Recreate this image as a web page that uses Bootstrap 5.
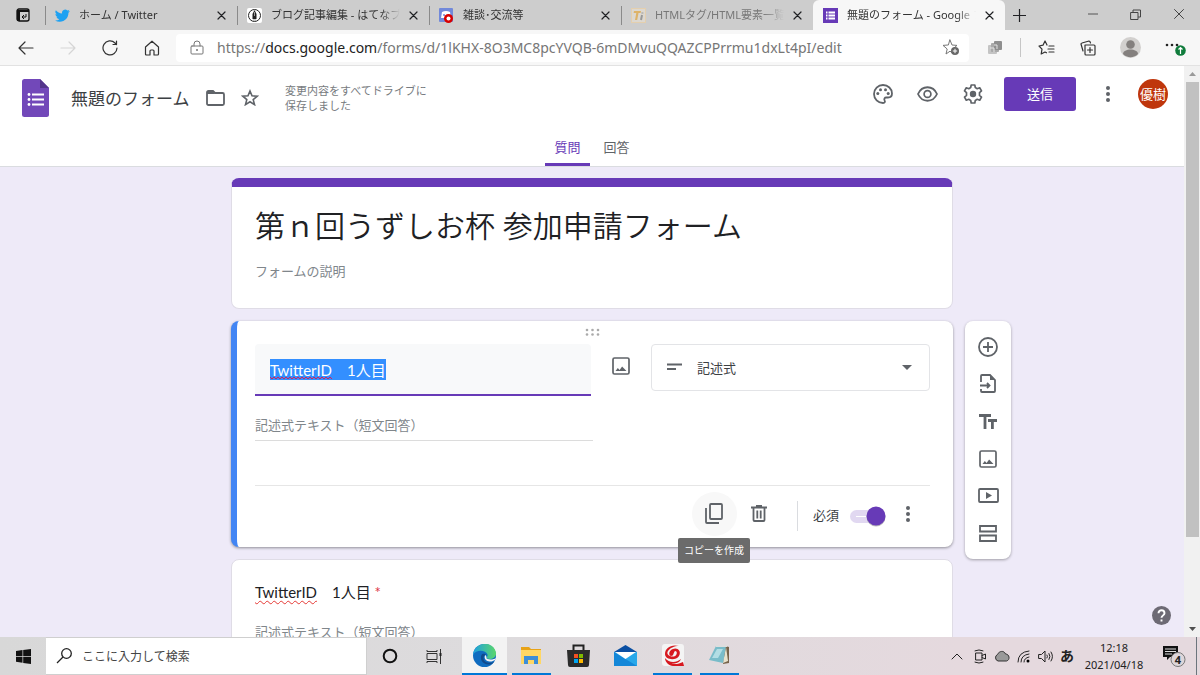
<!DOCTYPE html>
<html lang="ja">
<head>
<meta charset="utf-8">
<meta name="viewport" content="width=device-width, initial-scale=1">
<title>無題のフォーム - Google フォーム</title>
<link href="https://cdn.jsdelivr.net/npm/bootstrap@5.3.0/dist/css/bootstrap.min.css" rel="stylesheet">
<style>
  :root { --purple: #673ab7; --ink: #5f6368; }
  body { font-family: "Noto Sans", "Noto Sans CJK JP", sans-serif; font-size: 13px; color: #202124; line-height: 20px; }
  button, input, select { font: inherit; color: inherit; }
  .bare { border: 0; background: transparent; padding: 0; }
  svg { display: block; flex: none; }
  .ln { fill: none; stroke: currentColor; stroke-linecap: round; stroke-linejoin: round; }

  /* browser tabs */
  .tabstrip { background: #cdcdcd; height: 30px; font-size: 11px; padding-left: 45px; }
  .pin { left: 16px; top: 8px; }
  .btab { flex: 0 1 192px; min-width: 0; padding: 0 11px 0 10px; gap: 9px; }
  .btab::before { content: ""; position: absolute; left: 0; top: 6px; height: 19px; border-left: 1px solid #8a8a8a; }
  .btab .label { flex: 1 1 0; white-space: nowrap; overflow: hidden; color: #333; -webkit-mask-image: linear-gradient(90deg, #000 85%, transparent); mask-image: linear-gradient(90deg, #000 85%, transparent); }
  .btab.fresh { background: #f7f7f7; border-radius: 6px 6px 0 0; }
  .btab.fresh::before { display: none; }
  .btab.dim .label { color: #777; }
  .winbtn { width: 43px; height: 28px; color: #444; }
  .winbtn svg { margin: auto; }

  /* address row */
  .addressrow { background: #f7f7f7; height: 36px; padding-left: 5px; border-bottom: 1px solid #e2e2e2; color: #333; }
  .navbtn { width: 42px; height: 30px; flex: none; }
  .navbtn svg { margin: auto; }
  .navbtn.menu { width: 49px; }
  .omnibox { background: #fff; height: 28px; border-radius: 4px; margin: 0 5px 0 3px; padding: 0 9px 0 14px; gap: 13px; font-size: 14px; color: #767676; }
  .omnibox b { font-weight: 400; color: #222; }
  .omnibox a { color: inherit; text-decoration: none; }

  /* forms header */
  .appbar { background: #fff; border-bottom: 1px solid #dadce0; color: var(--ink); }
  .approw { height: 63px; padding: 0 16px 0 22px; }
  .docname { width: 119px; font-size: 17px; color: #3c4043; height: 28px; margin: 0 16px 0 22px; }
  .saved { font-size: 11px; line-height: 15px; color: #777b80; margin-left: 26px; }
  .iconbtn { width: 45px; height: 34px; }
  .iconbtn svg { margin: auto; }
  .send { width: 72px; height: 34px; background: var(--purple); color: #fff; border: 0; border-radius: 3px; margin: 0 14px 0 9px; }
  .avatar { width: 30px; height: 30px; background: #bf360c; color: #fff; margin-left: 12px; white-space: nowrap; }
  .viewtab { width: 45px; height: 37px; padding-top: 2px; color: var(--ink); text-decoration: none; border-bottom: 3px solid transparent; }
  .viewtab.on { color: var(--purple); border-color: var(--purple); border-radius: 2px 2px 0 0; }

  /* canvas */
  .canvas { background: #eeeaf8; }
  .board { display: grid; grid-template-columns: 1fr minmax(0, 722px) 1fr; column-gap: 12px; padding-top: 11px; }
  .sheets { gap: 12px; }
  .sheet { background: #fff; border: 1px solid #dfdce6; border-radius: 8px; padding: 0 23px; }
  .sheet.head { border-top: 9px solid var(--purple); height: 131px; }
  .sheet.edit { border: 0; border-left: 6px solid #4285f4; padding: 0 23px 0 18px; height: 226px; box-shadow: 0 1px 3px #0006; }
  .sheet.view { padding-top: 22px; height: 160px; }
  .formtitle { font-size: 30px; height: 44px; margin-top: 15px; font-weight: 350; }
  .hint { color: #80868b; height: 22px; }
  .desc { margin-top: 13px; }
  .grip { height: 23px; padding-top: 7px; }
  .qbox { width: 336px; height: 52px; background: #f8f9fa; border: 0; border-bottom: 2px solid var(--purple); border-radius: 4px 4px 0 0; padding: 0 15px; outline: 0; }
  .qfont { font-family: Lato, "Noto Sans CJK JP", sans-serif; font-size: 15px; }
  .qbox::selection { background: #338fff; color: #fff; }
  .squiggle { left: 15px; top: 32px; }
  .typepick { height: 47px; border: 1px solid #e3e4e7; border-radius: 4px; padding-left: 45px; appearance: none; background: #fff; color: #3c4043; }
  .typewrap { width: 279px; }
  .lead-ico { left: 16px; top: 17px; }
  .drop-ico { right: 18px; top: 21px; }
  .answer { width: 338px; border-bottom: 1px solid #dcdcdc; margin-top: 15px; height: 30px; padding-bottom: 2px; }
  .foot { border-top: 1px solid #e6e6e6; margin-top: 44px; height: 56px; padding-right: 4px; color: var(--ink); }
  .round { width: 45px; height: 44px; border-radius: 50%; }
  .round svg { margin: auto; }
  .round.hov { background: #f8f8f8; }
  .bar { height: 30px; border-left: 1px solid #dadce0; margin: 4px 15px 0; }
  .required-name { color: #3c4043; padding-top: 3px; }
  .toggle { appearance: none; width: 36px; height: 22px; margin: 4px 0 0 11px; background: url("data:image/svg+xml,%3Csvg xmlns='http://www.w3.org/2000/svg' width='36' height='22'%3E%3Crect y='5' width='34' height='13' rx='6.5' fill='%23e1d8f1'/%3E%3Cpath d='M6 11.500h10' stroke='%23fff'/%3E%3Ccircle cx='26' cy='12' r='9.500' fill='%23bbb'/%3E%3Ccircle cx='26' cy='11' r='9.500' fill='%23673ab7'/%3E%3C/svg%3E"); }
  .tip { left: 441px; top: 217px; background: #6b6b6b; color: #fff; font-size: 10px; line-height: 25px; padding: 0 6px; border-radius: 2px; white-space: nowrap; z-index: 3; }
  .misspelt { text-decoration: underline wavy #e53935 1px; text-underline-offset: 2px; }
  .below { margin-top: 18px; }
  .sidetools { width: 46px; height: 238px; margin-top: 143px; background: #fff; border-radius: 8px; box-shadow: 0 1px 3px #0005; padding: 7px 0; color: var(--ink); }
  .sidetools .iconbtn { width: 46px; height: 38px; }
  .help { right: 13px; bottom: 12px; }
  .scroller { width: 16px; background: #f1f1f1; color: #505050; }
  .scroller svg { margin: 6px auto; }
  .thumb { flex: 0 0 455px; width: 13px; background: #c1c1c1; }

  /* taskbar */
  .taskbar { height: 38px; background: linear-gradient(90deg, #d8d8d8, #dddbdd 40%, #e5d9de 80%); color: #222; }
  .taskbar svg { margin: auto; }
  .start { width: 46px; }
  .search { width: 321px; background: #fff; border: 1px solid #cfcfcf; border-left: 0; padding-left: 10px; gap: 9px; }
  .search svg { margin: 0; }
  .search input { font-size: 12px; outline: 0; padding-top: 2px; }
  .search input::placeholder { color: #444; opacity: 1; }
  .app { width: 45px; }
  .pinned { width: 47px; padding: 0 4px; }
  .pinned .bare { border-bottom: 2px solid transparent; }
  .pinned .bare.run { border-color: #0078d7; }
  .pinned.now { padding: 0 1px; }
  .pinned.now .bare { background: #f3f3f3; }
  .clock { font-size: 11px; line-height: 17px; width: 66px; }
  .tray { gap: 7px; padding-right: 3px; }
  .kana { font-size: 14px; font-weight: 700; }
  .note { width: 43px; padding-right: 3px; }
</style>
</head>
<body class="vh-100 d-flex flex-column overflow-hidden">

<div class="tabstrip d-flex position-relative flex-shrink-0">
  <svg class="pin position-absolute" width="14" height="14" viewBox="0 0 14 14"><rect x="1" y="1" width="12" height="12" rx="2" fill="none" stroke="#111" stroke-width="1.300"/><path d="M1 2h12v2H4v9H1z" fill="#111"/><path d="M10 6v3H6m2-2L6 9l2 2" fill="none" stroke="#111"/></svg>
  <div class="btab d-flex align-items-center position-relative">
    <svg width="15" height="15" viewBox="0 0 24 24" fill="#1da1f2"><path d="M23.600 4.800c-.9.400-1.800.7-2.800.8 1-.6 1.800-1.600 2.100-2.700-1 .6-2 1-3.100 1.200a4.900 4.900 0 0 0-8.400 4.500C7.400 8.400 3.800 6.400 1.400 3.500a4.900 4.900 0 0 0 1.500 6.600c-.8 0-1.600-.2-2.200-.6 0 2.400 1.700 4.400 3.900 4.900-.7.200-1.500.2-2.200.1a4.900 4.900 0 0 0 4.600 3.400A10 10 0 0 1 0 19.900a14 14 0 0 0 7.500 2.200c9.100 0 14.300-7.700 14-14.600 1-.7 1.800-1.600 2.100-2.700z"/></svg>
    <span class="label">ホーム / Twitter</span>
    <button class="bare" aria-label="タブを閉じる"><svg width="9" height="9" viewBox="0 0 9 9"><path class="ln" d="M1 1l7 7M8 1L1 8" stroke-width="1.200"/></svg></button>
  </div>
  <div class="btab d-flex align-items-center position-relative">
    <svg width="15" height="15" viewBox="0 0 15 15"><rect width="15" height="15" rx="2" fill="#fff"/><circle cx="7.500" cy="7.500" r="6" fill="none" stroke="#222"/><path d="M7.500 2l2 4v5h-4V6z" fill="#222"/><path d="M7.500 4v4M6 12h3" stroke="#999"/></svg>
    <span class="label">ブログ記事編集 - はてなブログ</span>
    <button class="bare" aria-label="タブを閉じる"><svg width="9" height="9" viewBox="0 0 9 9"><path class="ln" d="M1 1l7 7M8 1L1 8" stroke-width="1.200"/></svg></button>
  </div>
  <div class="btab d-flex align-items-center position-relative">
    <svg width="15" height="15" viewBox="0 0 15 15"><rect width="14" height="14" rx="1" fill="#7289da"/><path d="M3 4q4-2 8 0l1 6H2z" fill="#fff"/><circle cx="5" cy="7" r="1" fill="#7289da"/><circle cx="9.500" cy="10.500" r="4.500" fill="#d80000"/><circle cx="9.500" cy="10.500" r="2" fill="#fff"/></svg>
    <span class="label">雑談･交流等</span>
    <button class="bare" aria-label="タブを閉じる"><svg width="9" height="9" viewBox="0 0 9 9"><path class="ln" d="M1 1l7 7M8 1L1 8" stroke-width="1.200"/></svg></button>
  </div>
  <div class="btab dim d-flex align-items-center position-relative">
    <svg width="15" height="15" viewBox="0 0 15 15"><rect x=".5" y=".5" width="14" height="14" fill="#ddd8d0" stroke="#e4cfae"/><path d="M3 3h7l-.4 2H7.500l-1.300 7H4l1.300-7H2.600z" fill="#deb368"/><path d="M11 7l-1 5M11.400 4.500v1" stroke="#999" stroke-width="2"/></svg>
    <span class="label">HTMLタグ/HTML要素一覧</span>
    <button class="bare" aria-label="タブを閉じる"><svg width="9" height="9" viewBox="0 0 9 9"><path class="ln" d="M1 1l7 7M8 1L1 8" stroke-width="1.200"/></svg></button>
  </div>
  <div class="btab fresh d-flex align-items-center position-relative">
    <svg width="15" height="15" viewBox="0 0 15 15"><rect width="15" height="15" fill="#673ab7"/><path d="M5.500 4.500H12M5.500 7.500H12M5.500 10.500H12M3 4.500h1.500M3 7.500h1.500M3 10.500h1.500" stroke="#fff" stroke-width="2"/></svg>
    <span class="label">無題のフォーム - Google フォーム</span>
    <button class="bare" aria-label="タブを閉じる"><svg width="9" height="9" viewBox="0 0 9 9"><path class="ln" d="M1 1l7 7M8 1L1 8" stroke-width="1.200"/></svg></button>
  </div>
  <button class="bare px-2" aria-label="新しいタブ"><svg width="13" height="13" viewBox="0 0 13 13"><path class="ln" d="M6.500 0v13M0 6.500h13" stroke-width="1.200"/></svg></button>
  <div class="d-flex ms-auto">
    <button class="bare winbtn" aria-label="最小化"><svg width="10" height="10"><path d="M0 5h10" stroke="#555"/></svg></button>
    <button class="bare winbtn" aria-label="元に戻す"><svg width="11" height="11" viewBox="0 0 11 11"><path class="ln" d="M1 3.500h7v7H1zM3 3V1h7.500v7H8.500"/></svg></button>
    <button class="bare winbtn" aria-label="閉じる"><svg width="10" height="10" viewBox="0 0 10 10"><path class="ln" d="M.5.5l9 9m0-9l-9 9"/></svg></button>
  </div>
</div>

<div class="addressrow d-flex align-items-center flex-shrink-0">
  <button class="bare navbtn" aria-label="戻る"><svg width="16" height="14" viewBox="0 0 16 14"><path class="ln" d="M15 7H1m6-6L1 7l6 6" stroke-width="1.200"/></svg></button>
  <button class="bare navbtn" aria-label="進む" disabled><svg width="16" height="14" viewBox="0 0 16 14" color="#d5d5d5"><path class="ln" d="M1 7h14M9 1l6 6-6 6" stroke-width="1.200"/></svg></button>
  <button class="bare navbtn" aria-label="更新"><svg width="16" height="16" viewBox="0 0 16 16"><path class="ln" d="M15 8a7 7 0 1 1-2-5l1.500 1.500M14.500 1v3.500H11" stroke-width="1.200"/></svg></button>
  <button class="bare navbtn" aria-label="ホーム"><svg width="16" height="16" viewBox="0 0 16 16"><path class="ln" d="M1.500 7L8 1.200 14.500 7v7q0 1-1 1H10v-4q0-1-1-1H7q-1 0-1 1v4H2.500q-1 0-1-1z" stroke-width="1.200"/></svg></button>
  <div class="omnibox d-flex align-items-center flex-grow-1 overflow-hidden">
    <svg width="14" height="16" viewBox="0 0 14 16"><path class="ln" d="M2 6h10q1 0 1 1v6q0 1-1 1H2q-1 0-1-1V7q0-1 1-1zM4 6V4a3 3 0 0 1 6 0v2"/><circle cx="7" cy="10" r="1" fill="currentColor"/></svg>
    <a class="flex-grow-1 text-nowrap overflow-hidden" href="#">https://<b>docs.google.com</b>/forms/d/1lKHX-8O3MC8pcYVQB-6mDMvuQQAZCPPrrmu1dxLt4pI/edit</a>
    <button class="bare" aria-label="お気に入りに追加"><svg width="18" height="17" viewBox="0 0 18 17"><path class="ln" d="M8 1l2 5 5 .4-4 3.400L12 15l-4-2.800L4 15l1.200-5L1 6.400 6 6z"/><circle cx="13" cy="12" r="4" fill="#666"/><path d="M13 9.800v4.400M10.800 12h4.400" stroke="#fff"/></svg></button>
  </div>
  <button class="bare navbtn" aria-label="拡張機能"><svg width="15" height="14" viewBox="0 0 15 14"><rect y="4" width="9" height="9" rx="1" fill="#c4c4c4"/><rect x="3" y="2" width="8" height="9" rx="1" fill="#a9a9a9"/><rect x="6" width="8" height="9" rx="1" fill="#8f8f8f"/><path d="M2 7h4v4M6 4h3v4" stroke="#e4e4e4" fill="none"/></svg></button>
  <span class="vr mx-1 my-2"></span>
  <button class="bare navbtn" aria-label="お気に入り"><svg width="17" height="16" viewBox="0 0 17 16"><path class="ln" d="M9 5L7 1 5 5.200 1 6l3 3.200L3.200 14 7 12l1.500.8M11 6h5M10 9h6M11 12h5" stroke-width="1.200"/></svg></button>
  <button class="bare navbtn" aria-label="コレクション"><svg width="16" height="16" viewBox="0 0 16 16"><path class="ln" d="M5 5h9q1 0 1 1v8q0 1-1 1H6q-1 0-1-1zM10 7.500v5M7.500 10h5M3 11L1 4q0-1 1-1l7-2q1 0 1.500 2" stroke-width="1.200"/></svg></button>
  <button class="bare navbtn" aria-label="プロファイル"><svg width="21" height="21" viewBox="0 0 21 21"><circle cx="10.500" cy="10.500" r="10.500" fill="#d2d0ce"/><circle cx="10.500" cy="7.500" r="4.300" fill="#84807e"/><path d="M3 17c0-6 15-6 15 0a10.500 10.500 0 0 1-15 0z" fill="#84807e"/></svg></button>
  <button class="bare navbtn menu" aria-label="設定など"><svg width="21" height="18" viewBox="0 0 21 18"><g fill="#222"><circle cx="2" cy="6" r="1.300"/><circle cx="7" cy="6" r="1.300"/><circle cx="12" cy="6" r="1.300"/></g><circle cx="15.500" cy="11.500" r="5.300" fill="#107c3c"/><path d="M15.500 15V8.500m-2 2l2-2 2 2" stroke="#fff" fill="none" stroke-width="1.200"/></svg></button>
</div>

<div class="d-flex flex-grow-1 overflow-hidden">
  <div class="flex-grow-1 d-flex flex-column overflow-hidden position-relative canvas">
    <header class="appbar flex-shrink-0">
      <div class="approw d-flex align-items-center">
        <svg width="27" height="38" viewBox="0 0 27 38"><path d="M2.500 0H18l9 9v26.500q0 2.500-2.500 2.500h-22Q0 38 0 35.500v-33Q0 0 2.500 0z" fill="#7248b9"/><path d="M18 0l9 9h-9z" fill="#54358c"/><path d="M10 15.500h12M10 20.500h12M10 25.500h12" stroke="#fff" stroke-width="2.200"/><g fill="#fff"><circle cx="7" cy="15.500" r="1.400"/><circle cx="7" cy="20.500" r="1.400"/><circle cx="7" cy="25.500" r="1.400"/></g></svg>
        <input class="bare docname" aria-label="ドキュメント名" value="無題のフォーム">
        <button class="bare" aria-label="フォルダに移動"><svg width="19" height="16" viewBox="0 0 19 16"><path d="M1 2.500Q1 1 2.500 1H7l2 2h7.500Q18 3 18 4.500v9q0 1.500-1.500 1.500h-14Q1 15 1 13.500z" fill="none" stroke="currentColor" stroke-width="1.800"/><path d="M1 1h6l2 3H1z" fill="currentColor"/></svg></button>
        <button class="bare ms-3" aria-label="スター"><svg width="18" height="17" viewBox="0 0 18 17"><path d="M9 2l2 4.800 5.200.4-4 3.400 1.300 5L9 12.800l-4.500 2.800 1.300-5-4-3.400L7 6.800z" fill="none" stroke="currentColor" stroke-width="1.600"/></svg></button>
        <span class="saved text-nowrap">変更内容をすべてドライブに<br>保存しました</span>
        <div class="d-flex align-items-center ms-auto pb-2">
          <button class="bare iconbtn" aria-label="テーマをカスタマイズ"><svg width="20" height="20" viewBox="0 0 20 20"><path d="M10 1a9 9 0 0 0 0 18c2 0 2.300-1.600 1.600-2.600-.8-1.400 0-2.900 1.600-2.900H15c2.500 0 4-1.700 4-4C19 4.800 15 1 10 1z" fill="none" stroke="currentColor" stroke-width="1.800"/><g fill="currentColor"><circle cx="4.800" cy="9.500" r="1.500"/><circle cx="7.500" cy="5.800" r="1.500"/><circle cx="12.500" cy="5.800" r="1.500"/><circle cx="15.200" cy="9.500" r="1.500"/></g></svg></button>
          <button class="bare iconbtn" aria-label="プレビュー"><svg width="21" height="16" viewBox="0 0 21 16"><path d="M1 8c4-9 15-9 19 0-4 9-15 9-19 0z" fill="none" stroke="currentColor" stroke-width="1.800"/><circle cx="10.500" cy="8" r="3.400" fill="none" stroke="currentColor" stroke-width="1.700"/></svg></button>
          <button class="bare iconbtn" aria-label="設定"><svg width="20" height="20" viewBox="0 0 20 20"><path d="M8.200 1h3.600l.5 2.600 1.900 1.100 2.500-.9 1.800 3.100-2 1.700v2.800l2 1.700-1.800 3.100-2.500-.9-1.900 1.100-.5 2.600H8.200l-.5-2.600-1.900-1.100-2.500.9-1.800-3.100 2-1.700V8.600l-2-1.700 1.800-3.100 2.500.9 1.900-1.100z" fill="none" stroke="currentColor" stroke-width="1.700" stroke-linejoin="round"/><circle cx="10" cy="10" r="3.200" fill="currentColor"/></svg></button>
          <button class="send">送信</button>
          <button class="bare px-3" aria-label="その他"><svg width="4" height="16" fill="currentColor"><circle cx="2" cy="2" r="2"/><circle cx="2" cy="8" r="2"/><circle cx="2" cy="14" r="2"/></svg></button>
          <button class="bare avatar rounded-circle" aria-label="アカウント">優樹</button>
        </div>
      </div>
      <nav class="d-flex justify-content-center" aria-label="フォームの表示">
        <a class="viewtab on d-flex align-items-center justify-content-center" href="#">質問</a>
        <a class="viewtab d-flex align-items-center justify-content-center ms-1" href="#">回答</a>
      </nav>
    </header>

    <main class="board flex-grow-1 overflow-hidden">
      <div></div>
      <div class="sheets d-flex flex-column">
        <section class="sheet head flex-shrink-0 d-flex flex-column">
          <input class="bare formtitle w-100" aria-label="フォームのタイトル" value="第ｎ回うずしお杯 参加申請フォーム">
          <input class="bare hint desc w-100" aria-label="フォームの説明" value="フォームの説明">
        </section>
        <section class="sheet edit flex-shrink-0 position-relative">
          <div class="grip d-flex justify-content-center"><svg width="15" height="8" fill="#aaa"><circle cx="2" cy="2" r="1.300"/><circle cx="7.500" cy="2" r="1.300"/><circle cx="13" cy="2" r="1.300"/><circle cx="2" cy="6.500" r="1.300"/><circle cx="7.500" cy="6.500" r="1.300"/><circle cx="13" cy="6.500" r="1.300"/></svg></div>
          <div class="d-flex">
            <div class="position-relative">
              <input id="question" class="qbox qfont" aria-label="質問" spellcheck="false" value="TwitterID　1人目">
              <svg class="squiggle position-absolute pe-none" width="62" height="4"><defs><pattern id="wave" width="4" height="4" patternUnits="userSpaceOnUse"><path d="M0 1l2 2 2-2" fill="none" stroke="#d3205a"/></pattern></defs><rect width="62" height="4" fill="url(#wave)"/></svg>
            </div>
            <button class="bare mx-auto pb-2" aria-label="画像を追加"><svg width="18" height="18" viewBox="0 0 18 18" color="#5f6368"><rect x="1" y="1" width="16" height="16" rx="1.500" fill="none" stroke="currentColor" stroke-width="1.700"/><path d="M3.500 14l2.300-3 1.800 2 2.500-3.500L14.500 14z" fill="currentColor"/></svg></button>
            <div class="typewrap position-relative">
              <select class="typepick w-100" aria-label="質問の種類"><option>記述式</option></select>
              <svg class="lead-ico position-absolute pe-none" width="16" height="10"><path d="M0 3.500h15M0 8h9" stroke="#5f6368" stroke-width="1.800"/></svg>
              <svg class="drop-ico position-absolute pe-none" width="10" height="6"><path d="M0 0h10L5 5z" fill="#5f6368"/></svg>
            </div>
          </div>
          <input class="bare hint answer d-block" aria-label="回答" value="記述式テキスト（短文回答）" disabled>
          <div class="foot d-flex align-items-center justify-content-end">
            <button class="bare round hov" aria-label="コピーを作成"><svg width="18" height="21" viewBox="0 0 18 21"><rect x="5" y="1" width="12" height="15" rx="1" fill="none" stroke="currentColor" stroke-width="1.800"/><path d="M1 5v14q0 1 1 1h12" fill="none" stroke="currentColor" stroke-width="1.800"/></svg></button>
            <button class="bare round" aria-label="削除"><svg width="16" height="17" viewBox="0 0 16 17"><path d="M0 2.500h16M5 1h6M2.500 3v12q0 1 1 1h9q1 0 1-1V3M6.300 5.500v8M9.700 5.500v8" fill="none" stroke="currentColor" stroke-width="1.800"/></svg></button>
            <span class="bar"></span>
            <label for="required" class="required-name">必須</label>
            <input type="checkbox" class="toggle" id="required" checked>
            <button class="bare px-3 ms-1" aria-label="その他の設定"><svg width="4" height="16" fill="currentColor"><circle cx="2" cy="2" r="2"/><circle cx="2" cy="8" r="2"/><circle cx="2" cy="14" r="2"/></svg></button>
          </div>
          <div class="tip position-absolute" role="tooltip">コピーを作成</div>
        </section>
        <section class="sheet view flex-shrink-0">
          <div class="qfont"><span class="misspelt">TwitterID</span>　1人目 <span class="text-danger">*</span></div>
          <input class="bare hint below d-block w-100" aria-label="回答 2" value="記述式テキスト（短文回答）" disabled>
        </section>
      </div>
      <aside class="sidetools d-flex flex-column">
        <button class="bare iconbtn" aria-label="質問を追加"><svg width="20" height="20" viewBox="0 0 20 20"><circle cx="10" cy="10" r="9" fill="none" stroke="currentColor" stroke-width="1.800"/><path d="M10 5v10M5 10h10" stroke="currentColor" stroke-width="1.800"/></svg></button>
        <button class="bare iconbtn" aria-label="質問をインポート"><svg width="16" height="19" viewBox="0 0 16 19"><path d="M1 8V2q0-1 1-1h8l5 5v11q0 1-1 1H2q-1 0-1-1v-2M0 11.500h9M7 9l2.500 2.500L7 14" fill="none" stroke="currentColor" stroke-width="1.800"/><path d="M10 1l5 5h-5z" fill="currentColor"/></svg></button>
        <button class="bare iconbtn" aria-label="タイトルと説明を追加"><svg width="18" height="15" viewBox="0 0 18 15" fill="currentColor"><path d="M0 0h12v3H7.400v12H4.600V3H0zM9 5h9v3h-3.200v7H12V8H9z"/></svg></button>
        <button class="bare iconbtn" aria-label="画像を追加"><svg width="18" height="18" viewBox="0 0 18 18"><rect x="1" y="1" width="16" height="16" rx="1.500" fill="none" stroke="currentColor" stroke-width="1.700"/><path d="M3.500 14l2.300-3 1.800 2 2.500-3.500L14.500 14z" fill="currentColor"/></svg></button>
        <button class="bare iconbtn" aria-label="動画を追加"><svg width="21" height="15" viewBox="0 0 21 15"><rect x="1" y="1" width="19" height="13" rx="1" fill="none" stroke="currentColor" stroke-width="1.800"/><path d="M8 4l6 3.500L8 11z" fill="currentColor"/></svg></button>
        <button class="bare iconbtn" aria-label="セクションを追加"><svg width="18" height="17" viewBox="0 0 18 17"><path d="M1 1h16v5.500H1zM1 10.500h16V16H1z" fill="none" stroke="currentColor" stroke-width="1.800"/></svg></button>
      </aside>
    </main>
    <button class="bare help position-absolute" aria-label="ヘルプ"><svg width="19" height="19" viewBox="0 0 19 19"><circle cx="9.500" cy="9.500" r="9.500" fill="#6d6a74"/><path d="M6.500 7.300c0-4 6-4 6 0 0 2-3 2.200-3 4.500M9.500 13.500v2" fill="none" stroke="#fff" stroke-width="1.900"/></svg></button>
  </div>
  <div class="scroller d-flex flex-column align-items-center flex-shrink-0" aria-hidden="true">
    <svg width="7" height="4"><path d="M0 4l3.500-4L7 4z" fill="#999"/></svg>
    <div class="thumb"></div>
    <svg class="mt-auto" width="7" height="4"><path d="M0 0h7L3.500 4z" fill="currentColor"/></svg>
  </div>
</div>

<footer class="taskbar d-flex flex-shrink-0">
  <button class="bare start" aria-label="スタート"><svg width="15" height="15" viewBox="0 0 15 15" fill="#111"><path d="M0 2l6.500-1v6H0zM7.200.9L15 0v7H7.200zM0 7.700h6.500v6L0 12.800zM7.200 7.700H15V15l-7.800-1z"/></svg></button>
  <label class="search d-flex align-items-center"><svg width="17" height="16" viewBox="0 0 17 16"><circle cx="10.500" cy="5.500" r="4.800" fill="none" stroke="#222" stroke-width="1.300"/><path d="M7 9l-6 6" stroke="#222" stroke-width="1.300"/></svg><input class="bare flex-grow-1" aria-label="検索" placeholder="ここに入力して検索"></label>
  <button class="bare app" aria-label="Cortana"><svg width="16" height="16"><circle cx="8" cy="8" r="6.300" fill="none" stroke="#111" stroke-width="2"/></svg></button>
  <button class="bare app me-1" aria-label="タスク ビュー"><svg width="17" height="15" viewBox="0 0 17 15"><path d="M1 1v1.500h10V1M1 14v-1.500h10V14M1 4.500h10v6H1zM14.500 0v15" fill="none" stroke="#333"/><path d="M13.500 4h2v3h-2z" fill="#222"/></svg></button>
  <div class="pinned now d-flex"><button class="bare run w-100" aria-label="Microsoft Edge"><svg width="23" height="23" viewBox="0 0 23 23"><defs><linearGradient id="eg" x1="0" x2="1"><stop stop-color="#1d9fe0"/><stop offset="1" stop-color="#5bd76a"/></linearGradient></defs><circle cx="11.500" cy="11.500" r="11.500" fill="#0f6cc0"/><path d="M0 11C1-3 21-4 23 9c.5 5-5 7-8.500 5.500-2-1 .5-1.500 0-4C13 6 3 5 0 11z" fill="url(#eg)"/><path d="M8.500 11c-2 4 1 10 8 9.500 2 0 4-1.500 5-3-3 2-11 2-11-3.500 0-2 1-3 2.500-3.500-1-1-4-1-4.500.5z" fill="#114a8b"/><path d="M12.500 11c-2 2-.5 6 4 6.500 2.500.2 4-.5 5.500-1.500l1.500-2.500c-2 2-6.500 2.500-9.500 1.200-1-.7.200-1.500-1.500-3.700z" fill="#f3f3f3"/></svg></button></div>
  <div class="pinned d-flex"><button class="bare run w-100" aria-label="エクスプローラー"><svg width="21" height="19" viewBox="0 0 21 19"><path d="M0 1h8l2 2h10v15H0z" fill="#e8a317"/><path d="M0 4h20v14H0z" fill="#ffd765"/><path d="M3 18V10h14v8h-4v-4H7v4z" fill="#3d8ed8"/></svg></button></div>
  <div class="pinned d-flex"><button class="bare w-100" aria-label="Microsoft Store"><svg width="23" height="23" viewBox="0 0 23 23"><path d="M6.500 7V1.500h10V7" fill="none" stroke="#222" stroke-width="2"/><path d="M0 6h23l-1 15q0 2-2 2H3q-2 0-2-2z" fill="#2b2b2b"/><path d="M7 10h4v4H7z" fill="#f25022"/><path d="M12 10h4v4h-4z" fill="#7fba00"/><path d="M7 15h4v4H7z" fill="#00a4ef"/><path d="M12 15h4v4h-4z" fill="#ffb900"/></svg></button></div>
  <div class="pinned d-flex"><button class="bare w-100" aria-label="メール"><svg width="23" height="21" viewBox="0 0 23 21"><path d="M0 7l11.500-7L23 7z" fill="#0a4fa3"/><path d="M0 7h23v14H0z" fill="#28a8ea"/><path d="M0 7l23 14H0z" fill="#1487d8"/><path d="M1 7h21l-10.500 7z" fill="#fff"/></svg></button></div>
  <div class="pinned d-flex"><button class="bare run w-100" aria-label="ウイルスバスター"><svg width="22" height="22" viewBox="0 0 22 22"><rect width="22" height="22" rx="3" fill="#f4f4f4"/><path d="M17 2C9 0 3 4 3 10c0 6 11 7 14 2 3-5-2-9-6-7-4 1-5 6-2 7 3 0 2-3 4-5 3 0 2 5-1 5.500C7 13 4 10 6 7c2-3 6-5 11-5z" fill="#d71920"/><path d="M3 14c4 5 11 5 16 1-2 5-8 5-11 4 4 2 9 1 13-1l1 4H11c-4 0-8-4-8-8z" fill="#d71920"/></svg></button></div>
  <div class="pinned d-flex"><button class="bare run w-100" aria-label="メモ帳"><svg width="21" height="20" viewBox="0 0 21 20"><path d="M16 1l4 1v16l-6 1z" fill="#77634a"/><path d="M17 2l2 14-5 2z" fill="#e8e2cc"/><path d="M7 1h10l-3 17L0 15z" fill="#79bcc9"/><path d="M8 4h6L9 13H3z" fill="#b2dde4"/><path d="M7 1h11" stroke="#ddd" stroke-width="2"/></svg></button></div>

  <div class="tray d-flex align-items-center ms-auto">
    <button class="bare" aria-label="隠れているインジケーター"><svg width="12" height="7"><path class="ln" d="M1 6l5-5 5 5"/></svg></button>
    <svg class="ms-1" width="13" height="15" viewBox="0 0 13 15"><path class="ln" d="M2 4h6v7H2zM8 6.500L11.500 5v5L8 8.500M1 1.800Q5 0 9 1.800M1 13.200q4 1.800 8 0"/></svg>
    <svg width="16" height="12" viewBox="0 0 16 12"><path d="M4 11a3.500 3.500 0 0 1-.5-6.500C5 1 10 0 11.500 4c4 0 5 6 1 7z" fill="#999" stroke="#333"/></svg>
    <svg width="14" height="13" viewBox="0 0 14 13"><path class="ln" d="M1 12Q1 2 12 1M4 12q0-7 8-8M7 12q0-4 5-5" stroke="#444"/><circle cx="11" cy="11" r="1.500"/></svg>
    <svg width="15" height="13" viewBox="0 0 15 13"><path class="ln" d="M1 4.500h2.500L7 1v11L3.500 8.500H1z" stroke="#444"/><path class="ln" d="M9 5q1 1.500 0 3M11 3.500q2 3 0 6M13 2q3 4.500 0 9" stroke="#999"/></svg>
    <span class="kana">あ</span>
    <time class="clock text-center">12:18<br>2021/04/18</time>
    <button class="bare note border-end border-secondary h-100" aria-label="通知"><svg width="24" height="22" viewBox="0 0 24 22"><path d="M1 1h15v11H8l-3 3v-3H1z" fill="#111"/><path d="M3 4h11M3 6.500h11M3 9h7" stroke="#ddd"/><circle cx="16" cy="14.500" r="7" fill="#ddd6da" stroke="#777"/><text x="16" y="18.500" text-anchor="middle" font-size="11" font-weight="700" fill="#222">4</text></svg></button>
  </div>
</footer>

<script src="https://cdn.jsdelivr.net/npm/bootstrap@5.3.0/dist/js/bootstrap.bundle.min.js"></script>
<script>
  // open with the question text selected, ready to be overtyped
  const question = document.getElementById('question');
  question.focus();
  question.select();
</script>
</body>
</html>
